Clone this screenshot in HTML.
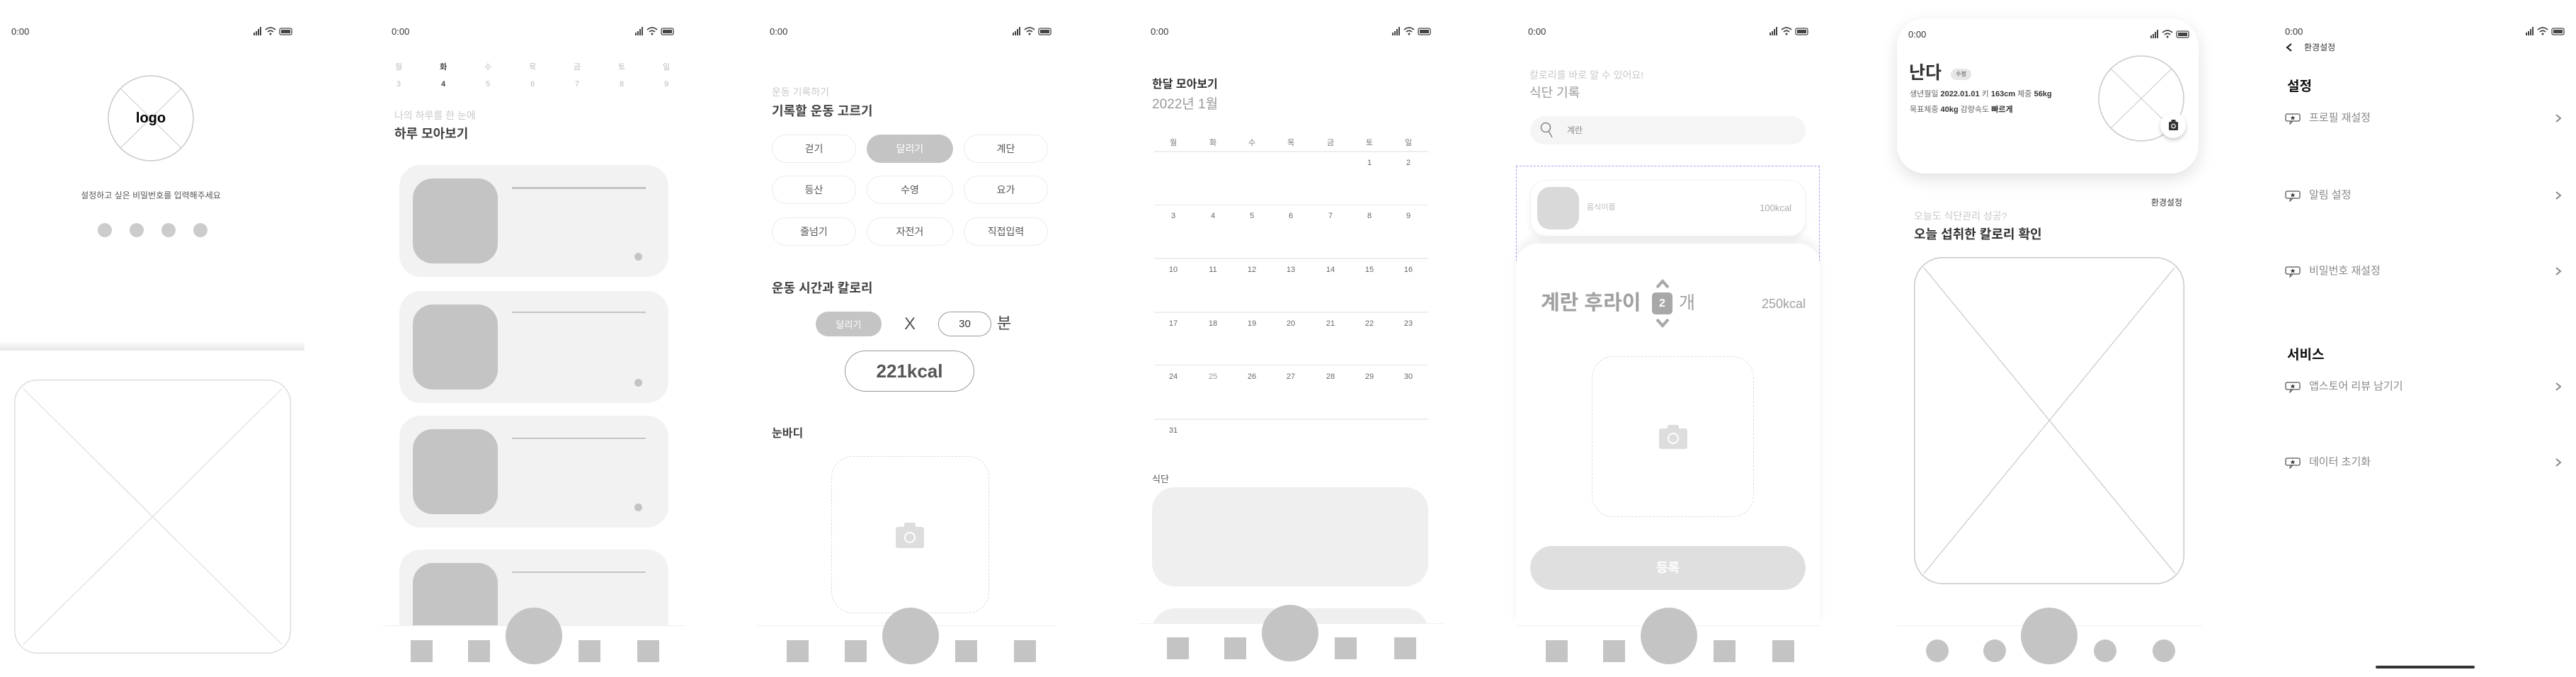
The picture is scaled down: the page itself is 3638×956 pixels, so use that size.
<!DOCTYPE html>
<html><head><meta charset="utf-8"><style>
*{margin:0;padding:0;box-sizing:border-box}
body{width:3638px;height:956px;background:#fff;position:relative;overflow:hidden;font-family:"Liberation Sans","Noto Sans CJK KR",sans-serif;color:#555}
.a{position:absolute}
.t{position:absolute;line-height:1;white-space:nowrap}
.c{transform:translateX(-50%)}
.r{transform:translateX(-100%)}
.sb{position:absolute;width:56px;height:12px}
.pill{position:absolute;border:1px solid #ececec;border-radius:20px;display:flex;align-items:center;justify-content:center;font-size:14px;color:#555;background:#fff}
.g{background:#c4c4c4}
.sq{position:absolute;width:31px;height:31px;background:#c4c4c4;top:904px}
.nl{position:absolute;height:1px;background:#f0f0f0;top:883px}
.big{position:absolute;width:80px;height:80px;border-radius:50%;background:#c4c4c4;top:858px}
</style></head><body>

<!-- status bar template used inline -->
<!-- SCREEN 1 -->
<div class="t" style="left:16px;top:38px;font-size:13px;color:#333">0:00</div>
<svg class="sb" style="left:358px;top:38px" viewBox="0 0 56 12"><rect x="0" y="8" width="2" height="4" fill="#444"/><rect x="3" y="6" width="2" height="6" fill="#444"/><rect x="6" y="3" width="2" height="9" fill="#444"/><rect x="9" y="0" width="2" height="12" fill="#444"/><path d="M17 4 Q24 -2 31 4" stroke="#444" stroke-width="1.8" fill="none"/><path d="M20 7 Q24 3.5 28 7" stroke="#444" stroke-width="1.8" fill="none"/><circle cx="24" cy="10" r="1.5" fill="#444"/><rect x="37" y="2" width="17" height="9" rx="2" stroke="#444" stroke-width="1.3" fill="none"/><rect x="39" y="4" width="13" height="5" fill="#444"/></svg>
<svg class="a" style="left:152px;top:106px" width="122" height="122"><circle cx="61" cy="61" r="60" fill="none" stroke="#c8c8c8" stroke-width="1.5"/><line x1="18" y1="19" x2="104" y2="103" stroke="#c8c8c8"/><line x1="104" y1="19" x2="18" y2="103" stroke="#c8c8c8"/></svg>
<div class="t c" style="left:213px;top:157px;font-size:20px;font-weight:bold;color:#000">logo</div>
<div class="t c" style="left:213px;top:270px;font-size:12px;color:#555">설정하고 싶은 비밀번호를 입력해주세요</div>
<div class="a" style="left:138px;top:315px;width:20px;height:20px;border-radius:50%;background:#ccc"></div>
<div class="a" style="left:183px;top:315px;width:20px;height:20px;border-radius:50%;background:#ccc"></div>
<div class="a" style="left:228px;top:315px;width:20px;height:20px;border-radius:50%;background:#ccc"></div>
<div class="a" style="left:273px;top:315px;width:20px;height:20px;border-radius:50%;background:#ccc"></div>
<div class="a" style="left:0;top:481px;width:430px;height:14px;background:linear-gradient(#fff,#e6e6e6)"></div>
<svg class="a" style="left:20px;top:536px" width="391" height="387"><rect x="0.75" y="0.75" width="389.5" height="385.5" rx="32" fill="none" stroke="#ddd" stroke-width="1.5"/><line x1="13" y1="13" x2="378" y2="374" stroke="#ddd" stroke-width="1.2"/><line x1="378" y1="13" x2="13" y2="374" stroke="#ddd" stroke-width="1.2"/></svg>

<!-- SCREEN 2 -->
<div class="t" style="left:553px;top:38px;font-size:13px;color:#333">0:00</div>
<svg class="sb" style="left:897px;top:38px" viewBox="0 0 56 12"><rect x="0" y="8" width="2" height="4" fill="#444"/><rect x="3" y="6" width="2" height="6" fill="#444"/><rect x="6" y="3" width="2" height="9" fill="#444"/><rect x="9" y="0" width="2" height="12" fill="#444"/><path d="M17 4 Q24 -2 31 4" stroke="#444" stroke-width="1.8" fill="none"/><path d="M20 7 Q24 3.5 28 7" stroke="#444" stroke-width="1.8" fill="none"/><circle cx="24" cy="10" r="1.5" fill="#444"/><rect x="37" y="2" width="17" height="9" rx="2" stroke="#444" stroke-width="1.3" fill="none"/><rect x="39" y="4" width="13" height="5" fill="#444"/></svg>
<div class="t c" style="left:563px;top:90px;font-size:11px;color:#bbb">월</div>
<div class="t c" style="left:626px;top:90px;font-size:11px;color:#444;font-weight:bold">화</div>
<div class="t c" style="left:689px;top:90px;font-size:11px;color:#bbb">수</div>
<div class="t c" style="left:752px;top:90px;font-size:11px;color:#bbb">목</div>
<div class="t c" style="left:815px;top:90px;font-size:11px;color:#bbb">금</div>
<div class="t c" style="left:878px;top:90px;font-size:11px;color:#bbb">토</div>
<div class="t c" style="left:941px;top:90px;font-size:11px;color:#bbb">일</div>
<div class="t c" style="left:563px;top:114px;font-size:11px;color:#bbb">3</div>
<div class="t c" style="left:626px;top:114px;font-size:11px;color:#444;font-weight:bold">4</div>
<div class="t c" style="left:689px;top:114px;font-size:11px;color:#bbb">5</div>
<div class="t c" style="left:752px;top:114px;font-size:11px;color:#bbb">6</div>
<div class="t c" style="left:815px;top:114px;font-size:11px;color:#bbb">7</div>
<div class="t c" style="left:878px;top:114px;font-size:11px;color:#bbb">8</div>
<div class="t c" style="left:941px;top:114px;font-size:11px;color:#bbb">9</div>
<div class="t" style="left:557px;top:156px;font-size:14px;color:#c8c8c8">나의 하루를 한 눈에</div>
<div class="t" style="left:557px;top:180px;font-size:18px;color:#444;font-weight:bold">하루 모아보기</div>
<div class="a" style="left:564px;top:233px;width:380px;height:158px;border-radius:30px;background:#f2f2f2"></div>
<div class="a" style="left:583px;top:252px;width:120px;height:120px;border-radius:28px;background:#c4c4c4"></div>
<div class="a" style="left:723px;top:264px;width:189px;height:3px;background:#c4c4c4"></div>
<div class="a" style="left:896px;top:357px;width:11px;height:11px;border-radius:50%;background:#c4c4c4"></div>
<div class="a" style="left:564px;top:411px;width:380px;height:158px;border-radius:30px;background:#f2f2f2"></div>
<div class="a" style="left:583px;top:430px;width:120px;height:120px;border-radius:28px;background:#c4c4c4"></div>
<div class="a" style="left:723px;top:440px;width:189px;height:2px;background:#c4c4c4"></div>
<div class="a" style="left:896px;top:535px;width:11px;height:11px;border-radius:50%;background:#c4c4c4"></div>
<div class="a" style="left:564px;top:587px;width:380px;height:158px;border-radius:30px;background:#f2f2f2"></div>
<div class="a" style="left:583px;top:606px;width:120px;height:120px;border-radius:28px;background:#c4c4c4"></div>
<div class="a" style="left:723px;top:618px;width:189px;height:2px;background:#c4c4c4"></div>
<div class="a" style="left:896px;top:711px;width:11px;height:11px;border-radius:50%;background:#c4c4c4"></div>
<div class="a" style="left:564px;top:776px;width:380px;height:107px;border-radius:30px 30px 0 0;background:#f2f2f2"></div>
<div class="a" style="left:583px;top:795px;width:120px;height:88px;border-radius:28px 28px 0 0;background:#c4c4c4"></div>
<div class="a" style="left:723px;top:807px;width:189px;height:2px;background:#c4c4c4"></div>
<div class="a" style="left:540px;top:883px;width:428px;height:73px;background:#fff"></div>
<div class="nl" style="left:540px;width:428px"></div>
<div class="sq" style="left:580px"></div><div class="sq" style="left:661px"></div><div class="sq" style="left:817px"></div><div class="sq" style="left:900px"></div>
<div class="big" style="left:714px"></div>

<!-- SCREEN 3 -->
<div class="t" style="left:1087px;top:38px;font-size:13px;color:#333">0:00</div>
<svg class="sb" style="left:1430px;top:38px" viewBox="0 0 56 12"><rect x="0" y="8" width="2" height="4" fill="#444"/><rect x="3" y="6" width="2" height="6" fill="#444"/><rect x="6" y="3" width="2" height="9" fill="#444"/><rect x="9" y="0" width="2" height="12" fill="#444"/><path d="M17 4 Q24 -2 31 4" stroke="#444" stroke-width="1.8" fill="none"/><path d="M20 7 Q24 3.5 28 7" stroke="#444" stroke-width="1.8" fill="none"/><circle cx="24" cy="10" r="1.5" fill="#444"/><rect x="37" y="2" width="17" height="9" rx="2" stroke="#444" stroke-width="1.3" fill="none"/><rect x="39" y="4" width="13" height="5" fill="#444"/></svg>
<div class="t" style="left:1090px;top:123px;font-size:14px;color:#c8c8c8">운동 기록하기</div>
<div class="t" style="left:1090px;top:148px;font-size:18px;color:#444;font-weight:bold">기록할 운동 고르기</div>
<div class="pill" style="left:1090px;top:190px;width:119px;height:40px">걷기</div>
<div class="pill g" style="left:1224px;top:190px;width:122px;height:40px;color:#fff;border:none">달리기</div>
<div class="pill" style="left:1361px;top:190px;width:119px;height:40px">계단</div>
<div class="pill" style="left:1090px;top:248px;width:119px;height:40px">등산</div>
<div class="pill" style="left:1224px;top:248px;width:122px;height:40px">수영</div>
<div class="pill" style="left:1361px;top:248px;width:119px;height:40px">요가</div>
<div class="pill" style="left:1090px;top:307px;width:119px;height:40px">줄넘기</div>
<div class="pill" style="left:1224px;top:307px;width:122px;height:40px">자전거</div>
<div class="pill" style="left:1361px;top:307px;width:119px;height:40px">직접입력</div>
<div class="t" style="left:1090px;top:398px;font-size:18px;color:#444;font-weight:bold">운동 시간과 칼로리</div>
<div class="pill g" style="left:1152px;top:440px;width:93px;height:35px;border:none;color:#fff;font-size:13px">달리기</div>
<div class="t c" style="left:1285px;top:446px;font-size:24px;color:#555">X</div>
<div class="pill" style="left:1325px;top:440px;width:75px;height:35px;border:1px solid #999;font-size:15px;color:#333">30</div>
<div class="t" style="left:1408px;top:446px;font-size:22px;color:#444">분</div>
<div class="pill" style="left:1193px;top:495px;width:183px;height:58px;border:1px solid #999;border-radius:29px;font-size:26px;font-weight:bold;color:#555">221kcal</div>
<div class="t" style="left:1090px;top:605px;font-size:16px;color:#444;font-weight:bold">눈바디</div>
<div class="a" style="left:1174px;top:644px;width:223px;height:222px;border:1.5px dashed #ddd;border-radius:30px"></div>
<svg class="a" style="left:1265px;top:738px" width="40" height="36" viewBox="0 0 40 36"><rect x="0" y="6" width="40" height="30" rx="3" fill="#ddd"/><rect x="12" y="0" width="16" height="8" rx="2" fill="#ddd"/><circle cx="20" cy="21" r="7" fill="none" stroke="#fff" stroke-width="2"/></svg>
<div class="a" style="left:1070px;top:883px;width:423px;height:73px;background:#fff"></div>
<div class="nl" style="left:1070px;width:423px"></div>
<div class="sq" style="left:1111px"></div><div class="sq" style="left:1193px"></div><div class="sq" style="left:1349px"></div><div class="sq" style="left:1432px"></div>
<div class="big" style="left:1246px"></div>

<!-- SCREEN 4 -->
<div class="t" style="left:1625px;top:38px;font-size:13px;color:#333">0:00</div>
<svg class="sb" style="left:1966px;top:38px" viewBox="0 0 56 12"><rect x="0" y="8" width="2" height="4" fill="#444"/><rect x="3" y="6" width="2" height="6" fill="#444"/><rect x="6" y="3" width="2" height="9" fill="#444"/><rect x="9" y="0" width="2" height="12" fill="#444"/><path d="M17 4 Q24 -2 31 4" stroke="#444" stroke-width="1.8" fill="none"/><path d="M20 7 Q24 3.5 28 7" stroke="#444" stroke-width="1.8" fill="none"/><circle cx="24" cy="10" r="1.5" fill="#444"/><rect x="37" y="2" width="17" height="9" rx="2" stroke="#444" stroke-width="1.3" fill="none"/><rect x="39" y="4" width="13" height="5" fill="#444"/></svg>
<div class="t" style="left:1627px;top:112px;font-size:16px;color:#333;font-weight:bold">한달 모아보기</div>
<div class="t" style="left:1627px;top:138px;font-size:19px;color:#999">2022년 1월</div>
<div id="cal"></div>
<div class="t c" style="left:1657px;top:197px;font-size:11px;color:#777">월</div>
<div class="t c" style="left:1713px;top:197px;font-size:11px;color:#777">화</div>
<div class="t c" style="left:1768px;top:197px;font-size:11px;color:#777">수</div>
<div class="t c" style="left:1823px;top:197px;font-size:11px;color:#777">목</div>
<div class="t c" style="left:1879px;top:197px;font-size:11px;color:#777">금</div>
<div class="t c" style="left:1934px;top:197px;font-size:11px;color:#777">토</div>
<div class="t c" style="left:1989px;top:197px;font-size:11px;color:#777">일</div>
<div class="a" style="left:1630px;top:213px;width:387px;height:2px;background:#eee"></div>
<div class="a" style="left:1630px;top:289px;width:387px;height:1px;background:#e8e8e8"></div>
<div class="a" style="left:1630px;top:364px;width:387px;height:2px;background:#eee"></div>
<div class="a" style="left:1630px;top:440px;width:387px;height:2px;background:#eee"></div>
<div class="a" style="left:1630px;top:515px;width:387px;height:1px;background:#e4e4e4"></div>
<div class="a" style="left:1630px;top:591px;width:387px;height:2px;background:#eee"></div>
<div style="font-size:11px;color:#666">
<div class="t c" style="left:1934px;top:225px">1</div><div class="t c" style="left:1989px;top:225px">2</div>
<div class="t c" style="left:1657px;top:300px">3</div><div class="t c" style="left:1713px;top:300px">4</div><div class="t c" style="left:1768px;top:300px">5</div><div class="t c" style="left:1823px;top:300px">6</div><div class="t c" style="left:1879px;top:300px">7</div><div class="t c" style="left:1934px;top:300px">8</div><div class="t c" style="left:1989px;top:300px">9</div>
<div class="t c" style="left:1657px;top:376px">10</div><div class="t c" style="left:1713px;top:376px">11</div><div class="t c" style="left:1768px;top:376px">12</div><div class="t c" style="left:1823px;top:376px">13</div><div class="t c" style="left:1879px;top:376px">14</div><div class="t c" style="left:1934px;top:376px">15</div><div class="t c" style="left:1989px;top:376px">16</div>
<div class="t c" style="left:1657px;top:452px">17</div><div class="t c" style="left:1713px;top:452px">18</div><div class="t c" style="left:1768px;top:452px">19</div><div class="t c" style="left:1823px;top:452px">20</div><div class="t c" style="left:1879px;top:452px">21</div><div class="t c" style="left:1934px;top:452px">22</div><div class="t c" style="left:1989px;top:452px">23</div>
<div class="t c" style="left:1657px;top:527px">24</div><div class="t c" style="left:1713px;top:527px;color:#999">25</div><div class="t c" style="left:1768px;top:527px">26</div><div class="t c" style="left:1823px;top:527px">27</div><div class="t c" style="left:1879px;top:527px">28</div><div class="t c" style="left:1934px;top:527px">29</div><div class="t c" style="left:1989px;top:527px">30</div>
<div class="t c" style="left:1657px;top:603px">31</div>
</div>
<div class="t" style="left:1627px;top:670px;font-size:13px;color:#555">식단</div>
<div class="a" style="left:1627px;top:688px;width:390px;height:140px;border-radius:32px;background:#efefef"></div>
<div class="a" style="left:1627px;top:859px;width:390px;height:40px;border-radius:32px 32px 0 0;background:#efefef"></div>
<div class="a" style="left:1608px;top:880px;width:430px;height:76px;background:#fff"></div>
<div class="nl" style="left:1608px;width:430px;top:880px"></div>
<div class="sq" style="left:1648px;top:900px"></div><div class="sq" style="left:1729px;top:900px"></div><div class="sq" style="left:1885px;top:900px"></div><div class="sq" style="left:1969px;top:900px"></div>
<div class="big" style="left:1782px;top:854px"></div>

<!-- SCREEN 5 -->
<div class="t" style="left:2158px;top:38px;font-size:13px;color:#333">0:00</div>
<svg class="sb" style="left:2499px;top:38px" viewBox="0 0 56 12"><rect x="0" y="8" width="2" height="4" fill="#444"/><rect x="3" y="6" width="2" height="6" fill="#444"/><rect x="6" y="3" width="2" height="9" fill="#444"/><rect x="9" y="0" width="2" height="12" fill="#444"/><path d="M17 4 Q24 -2 31 4" stroke="#444" stroke-width="1.8" fill="none"/><path d="M20 7 Q24 3.5 28 7" stroke="#444" stroke-width="1.8" fill="none"/><circle cx="24" cy="10" r="1.5" fill="#444"/><rect x="37" y="2" width="17" height="9" rx="2" stroke="#444" stroke-width="1.3" fill="none"/><rect x="39" y="4" width="13" height="5" fill="#444"/></svg>
<div class="t" style="left:2160px;top:99px;font-size:14px;color:#c8c8c8">칼로리를 바로 알 수 있어요!</div>
<div class="t" style="left:2160px;top:122px;font-size:18px;color:#999">식단 기록</div>
<div class="a" style="left:2161px;top:164px;width:389px;height:40px;border-radius:20px;background:#f5f5f5"></div>
<svg class="a" style="left:2175px;top:172px" width="20" height="24"><circle cx="8" cy="8" r="6.5" fill="none" stroke="#888" stroke-width="1.5"/><line x1="12" y1="13" x2="17" y2="22" stroke="#888" stroke-width="1.5"/></svg>
<div class="t" style="left:2213px;top:178px;font-size:12px;color:#888">계란</div>
<div class="a" style="left:2141px;top:234px;width:429px;height:140px;border:1.5px dashed #a99cf2;border-bottom:none"></div>
<div class="a" style="left:2161px;top:254px;width:389px;height:80px;border-radius:22px;background:#fff;border:1px solid #f0f0f0;box-shadow:0 6px 8px rgba(0,0,0,.05)"></div>
<div class="a" style="left:2171px;top:264px;width:59px;height:60px;border-radius:18px;background:#d9d9d9"></div>
<div class="t" style="left:2241px;top:288px;font-size:11px;color:#bbb">음식이름</div>
<div class="t r" style="left:2530px;top:287px;font-size:13px;color:#aaa">100kcal</div>
<div class="a" style="left:2141px;top:344px;width:429px;height:540px;border-radius:30px 30px 0 0;background:#fff;box-shadow:0 -8px 12px rgba(0,0,0,.06)"></div>
<div class="t" style="left:2176px;top:414px;font-size:29px;color:#a0a0a0;font-weight:bold">계란 후라이</div>
<div class="a" style="left:2333px;top:413px;width:29px;height:31px;border-radius:5px;background:#a8a8a8;color:#fff;font-size:16px;font-weight:bold;text-align:center;line-height:31px">2</div>
<svg class="a" style="left:2338px;top:394px" width="20" height="14"><path d="M2 12 L10 3 L18 12" stroke="#a8a8a8" stroke-width="4" fill="none"/></svg>
<svg class="a" style="left:2338px;top:449px" width="20" height="14"><path d="M2 2 L10 11 L18 2" stroke="#a8a8a8" stroke-width="4" fill="none"/></svg>
<div class="t" style="left:2371px;top:416px;font-size:25px;color:#a0a0a0">개</div>
<div class="t r" style="left:2550px;top:420px;font-size:18px;color:#a0a0a0">250kcal</div>
<div class="a" style="left:2248px;top:503px;width:229px;height:227px;border:1.5px dashed #ddd;border-radius:30px"></div>
<svg class="a" style="left:2343px;top:600px" width="40" height="34" viewBox="0 0 40 34"><rect x="0" y="5" width="40" height="29" rx="3" fill="#ddd"/><rect x="12" y="0" width="16" height="8" rx="2" fill="#ddd"/><circle cx="20" cy="19" r="7" fill="none" stroke="#fff" stroke-width="2"/></svg>
<div class="a" style="left:2161px;top:771px;width:389px;height:62px;border-radius:31px;background:#dfdfdf;color:#fff;font-size:18px;font-weight:bold;text-align:center;line-height:62px">등록</div>
<div class="nl" style="left:2142px;width:429px"></div>
<div class="sq" style="left:2183px"></div><div class="sq" style="left:2264px"></div><div class="sq" style="left:2420px"></div><div class="sq" style="left:2503px"></div>
<div class="big" style="left:2317px"></div>

<!-- SCREEN 6 -->
<div class="a" style="left:2679px;top:26px;width:426px;height:219px;border-radius:40px;background:#fff;box-shadow:0 8px 24px rgba(0,0,0,.12)"></div>
<div class="t" style="left:2695px;top:42px;font-size:13px;color:#333">0:00</div>
<svg class="sb" style="left:3037px;top:42px" viewBox="0 0 56 12"><rect x="0" y="8" width="2" height="4" fill="#444"/><rect x="3" y="6" width="2" height="6" fill="#444"/><rect x="6" y="3" width="2" height="9" fill="#444"/><rect x="9" y="0" width="2" height="12" fill="#444"/><path d="M17 4 Q24 -2 31 4" stroke="#444" stroke-width="1.8" fill="none"/><path d="M20 7 Q24 3.5 28 7" stroke="#444" stroke-width="1.8" fill="none"/><circle cx="24" cy="10" r="1.5" fill="#444"/><rect x="37" y="2" width="17" height="9" rx="2" stroke="#444" stroke-width="1.3" fill="none"/><rect x="39" y="4" width="13" height="5" fill="#444"/></svg>
<div class="t" style="left:2696px;top:91px;font-size:25px;color:#333;font-weight:bold">난다</div>
<div class="a" style="left:2755px;top:97px;width:29px;height:16px;border-radius:8px;background:#e6e6e6;font-size:8px;color:#444;text-align:center;line-height:16px">수정</div>
<div class="t" style="left:2697px;top:128px;font-size:11px;color:#666">생년월일 <b style="color:#333">2022.01.01</b> 키 <b style="color:#333">163cm</b> 체중 <b style="color:#333">56kg</b></div>
<div class="t" style="left:2697px;top:150px;font-size:11px;color:#666">목표체중 <b style="color:#333">40kg</b> 감량속도 <b style="color:#333">빠르게</b></div>
<svg class="a" style="left:2963px;top:78px" width="122" height="122"><circle cx="61" cy="61" r="60" fill="none" stroke="#c8c8c8" stroke-width="1.5"/><line x1="18" y1="19" x2="104" y2="103" stroke="#c8c8c8"/><line x1="104" y1="19" x2="18" y2="103" stroke="#c8c8c8"/></svg>
<div class="a" style="left:3051px;top:159px;width:36px;height:36px;border-radius:50%;background:#fff;box-shadow:0 3px 6px rgba(0,0,0,.2)"></div>
<svg class="a" style="left:3063px;top:169px" width="13" height="15" viewBox="0 0 13 15"><rect x="0" y="3" width="13" height="12" rx="1.5" fill="#333"/><rect x="3.5" y="0" width="6" height="4" fill="#333"/><circle cx="6.5" cy="9" r="2.8" fill="none" stroke="#fff" stroke-width="1.2"/></svg>
<div class="t r" style="left:3082px;top:280px;font-size:12px;color:#333">환경설정</div>
<div class="t" style="left:2703px;top:298px;font-size:14px;color:#c8c8c8">오늘도 식단관리 성공?</div>
<div class="t" style="left:2703px;top:322px;font-size:18px;color:#333;font-weight:bold">오늘 섭취한 칼로리 확인</div>
<svg class="a" style="left:2703px;top:363px" width="382" height="462"><rect x="0.75" y="0.75" width="380.5" height="460.5" rx="40" fill="none" stroke="#c8c8c8" stroke-width="1.5"/><line x1="14" y1="15" x2="369" y2="447" stroke="#c8c8c8" stroke-width="1.2"/><line x1="368" y1="15" x2="14" y2="447" stroke="#c8c8c8" stroke-width="1.2"/></svg>
<div class="nl" style="left:2680px;width:430px"></div>
<div class="a" style="left:2720px;top:903px;width:32px;height:32px;border-radius:50%;background:#c4c4c4"></div>
<div class="a" style="left:2801px;top:903px;width:32px;height:32px;border-radius:50%;background:#c4c4c4"></div>
<div class="a" style="left:2957px;top:903px;width:32px;height:32px;border-radius:50%;background:#c4c4c4"></div>
<div class="a" style="left:3040px;top:903px;width:32px;height:32px;border-radius:50%;background:#c4c4c4"></div>
<div class="big" style="left:2854px"></div>

<!-- SCREEN 7 -->
<div class="t" style="left:3227px;top:38px;font-size:13px;color:#333">0:00</div>
<svg class="sb" style="left:3567px;top:38px" viewBox="0 0 56 12"><rect x="0" y="8" width="2" height="4" fill="#444"/><rect x="3" y="6" width="2" height="6" fill="#444"/><rect x="6" y="3" width="2" height="9" fill="#444"/><rect x="9" y="0" width="2" height="12" fill="#444"/><path d="M17 4 Q24 -2 31 4" stroke="#444" stroke-width="1.8" fill="none"/><path d="M20 7 Q24 3.5 28 7" stroke="#444" stroke-width="1.8" fill="none"/><circle cx="24" cy="10" r="1.5" fill="#444"/><rect x="37" y="2" width="17" height="9" rx="2" stroke="#444" stroke-width="1.3" fill="none"/><rect x="39" y="4" width="13" height="5" fill="#444"/></svg>
<svg class="a" style="left:3228px;top:61px" width="10" height="12"><path d="M8 1 L2 6 L8 11" stroke="#111" stroke-width="2" fill="none"/></svg>
<div class="t" style="left:3254px;top:61px;font-size:12px;color:#333">환경설정</div>
<div class="t" style="left:3230px;top:113px;font-size:19px;color:#111;font-weight:bold">설정</div>
<div class="t" style="left:3230px;top:492px;font-size:19px;color:#111;font-weight:bold">서비스</div>
<div style="color:#888;font-size:15px">
<div class="t" style="left:3261px;top:159px">프로필 재설정</div>
<div class="t" style="left:3261px;top:268px">알림 설정</div>
<div class="t" style="left:3261px;top:375px">비밀번호 재설정</div>
<div class="t" style="left:3261px;top:538px">앱스토어 리뷰 남기기</div>
<div class="t" style="left:3261px;top:645px">데이터 초기화</div>
</div>
<svg class="a" style="left:3227px;top:160px" width="22" height="16"><rect x="1" y="1" width="20" height="10" rx="2" fill="none" stroke="#555" stroke-width="1.3"/><path d="M8 11 L7 15 L11 11" stroke="#555" stroke-width="1.2" fill="none"/><path d="M11 3 L12 5.5 L14.5 5.5 L12.5 7 L13.3 9.5 L11 8 L8.7 9.5 L9.5 7 L7.5 5.5 L10 5.5Z" fill="#333"/></svg>
<svg class="a" style="left:3227px;top:269px" width="22" height="16"><rect x="1" y="1" width="20" height="10" rx="2" fill="none" stroke="#555" stroke-width="1.3"/><path d="M8 11 L7 15 L11 11" stroke="#555" stroke-width="1.2" fill="none"/><path d="M11 3 L12 5.5 L14.5 5.5 L12.5 7 L13.3 9.5 L11 8 L8.7 9.5 L9.5 7 L7.5 5.5 L10 5.5Z" fill="#333"/></svg>
<svg class="a" style="left:3227px;top:376px" width="22" height="16"><rect x="1" y="1" width="20" height="10" rx="2" fill="none" stroke="#555" stroke-width="1.3"/><path d="M8 11 L7 15 L11 11" stroke="#555" stroke-width="1.2" fill="none"/><path d="M11 3 L12 5.5 L14.5 5.5 L12.5 7 L13.3 9.5 L11 8 L8.7 9.5 L9.5 7 L7.5 5.5 L10 5.5Z" fill="#333"/></svg>
<svg class="a" style="left:3227px;top:539px" width="22" height="16"><rect x="1" y="1" width="20" height="10" rx="2" fill="none" stroke="#555" stroke-width="1.3"/><path d="M8 11 L7 15 L11 11" stroke="#555" stroke-width="1.2" fill="none"/><path d="M11 3 L12 5.5 L14.5 5.5 L12.5 7 L13.3 9.5 L11 8 L8.7 9.5 L9.5 7 L7.5 5.5 L10 5.5Z" fill="#333"/></svg>
<svg class="a" style="left:3227px;top:646px" width="22" height="16"><rect x="1" y="1" width="20" height="10" rx="2" fill="none" stroke="#555" stroke-width="1.3"/><path d="M8 11 L7 15 L11 11" stroke="#555" stroke-width="1.2" fill="none"/><path d="M11 3 L12 5.5 L14.5 5.5 L12.5 7 L13.3 9.5 L11 8 L8.7 9.5 L9.5 7 L7.5 5.5 L10 5.5Z" fill="#333"/></svg>
<svg class="a" style="left:3608px;top:161px" width="10" height="12"><path d="M2 1 L8 6 L2 11" stroke="#888" stroke-width="2" fill="none"/></svg>
<svg class="a" style="left:3608px;top:270px" width="10" height="12"><path d="M2 1 L8 6 L2 11" stroke="#888" stroke-width="2" fill="none"/></svg>
<svg class="a" style="left:3608px;top:377px" width="10" height="12"><path d="M2 1 L8 6 L2 11" stroke="#888" stroke-width="2" fill="none"/></svg>
<svg class="a" style="left:3608px;top:540px" width="10" height="12"><path d="M2 1 L8 6 L2 11" stroke="#888" stroke-width="2" fill="none"/></svg>
<svg class="a" style="left:3608px;top:647px" width="10" height="12"><path d="M2 1 L8 6 L2 11" stroke="#888" stroke-width="2" fill="none"/></svg>
<div class="a" style="left:3355px;top:940px;width:140px;height:4px;border-radius:2px;background:#333"></div>
</body></html>
